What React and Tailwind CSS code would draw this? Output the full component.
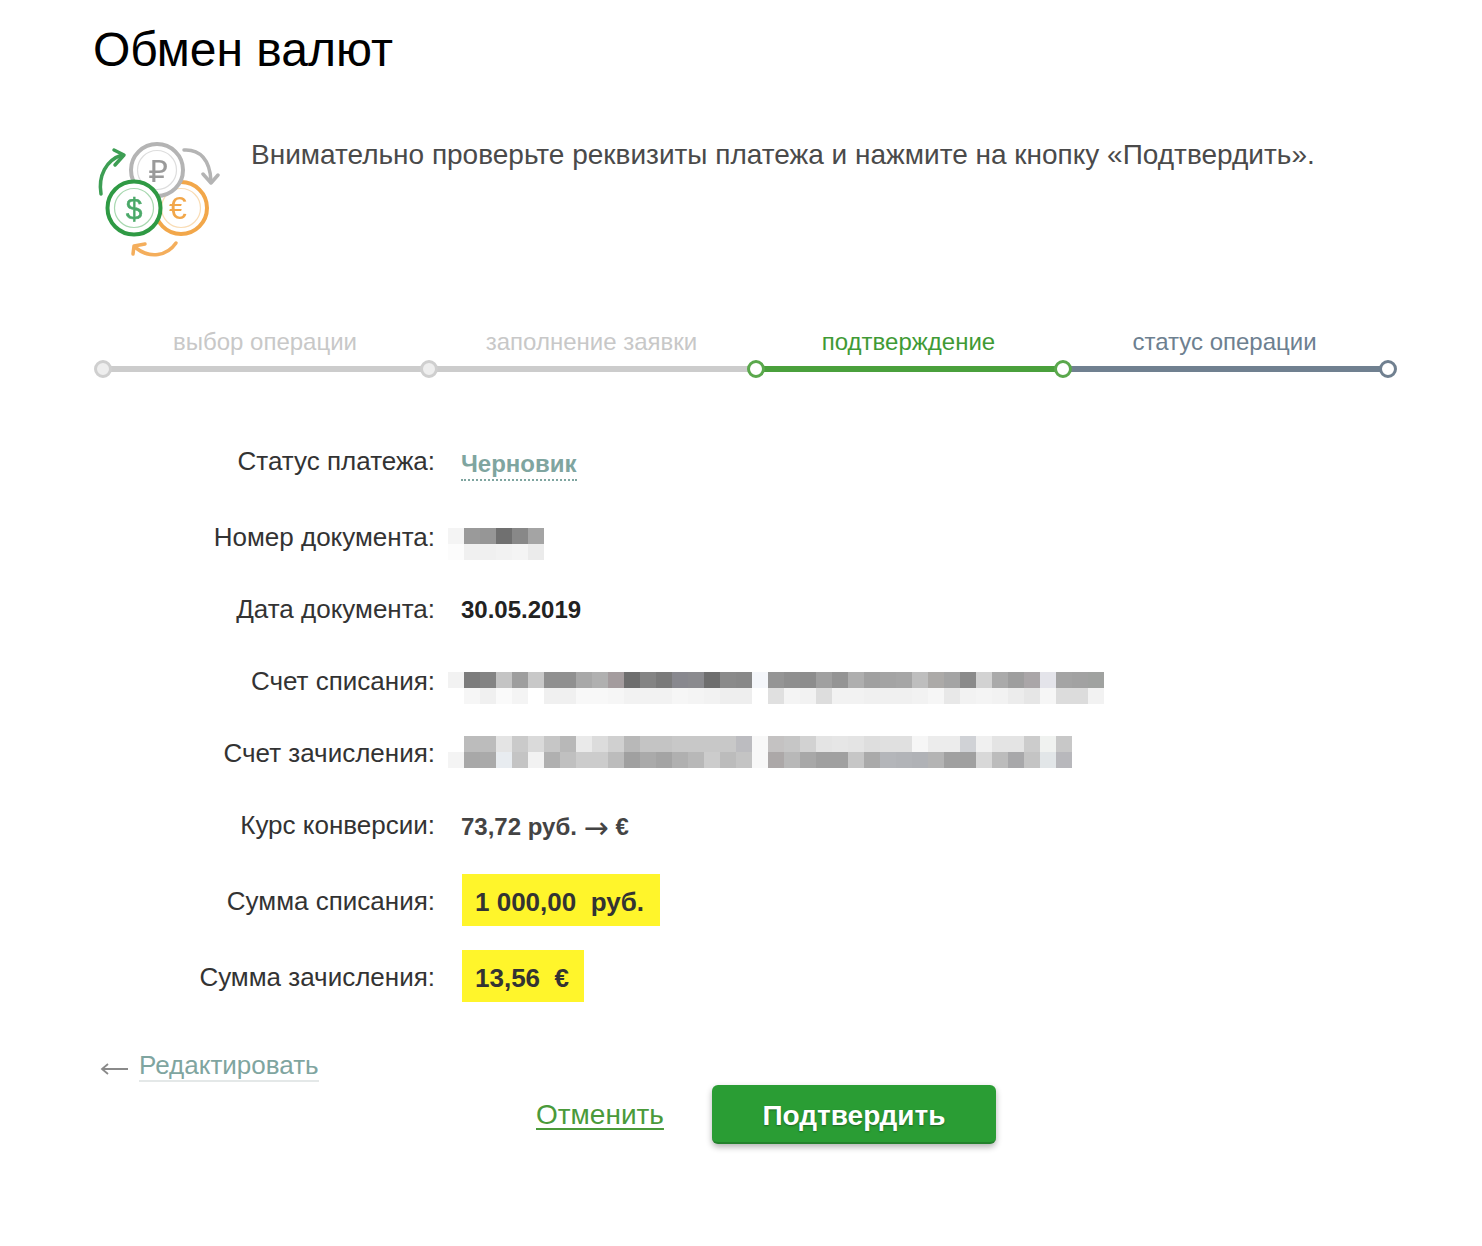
const steps = [
    { label: "выбор операции", width: "w-[326px]", text: "text-[#c8c8c8]", bar: "bg-[#cccccc]", dot: "border-[#cfcfcf] bg-[#eeeeee]" },
    { label: "заполнение заявки", width: "w-[327px]", text: "text-[#c8c8c8]", bar: "bg-[#cccccc]", dot: "border-[#cfcfcf] bg-[#eeeeee]" },
    { label: "подтверждение", width: "w-[307px]", text: "text-[#3f9a35]", bar: "bg-[#4aa03c]", dot: "border-[#5aa84c] bg-white" },
    { label: "статус операции", width: "w-[325px]", text: "text-[#6d8090]", bar: "bg-[#708090]", dot: "border-[#5aa84c] bg-white" },
];

const docPixels = [
    ["#f4f4f4", "#9a9a9a", "#969696", "#707070", "#888888", "#a4a4a4"],
    ["#fcfcfc", "#f0f0f0", "#f0f0f0", "#f2f2f2", "#f4f4f4", "#ebebeb"],
];

const fromPixels = [
    ["#f2f2f2", "#7c7c7c", "#848484", "#c4c4c4", "#9e9e9e", "#c8c8c8", "#909090", "#909090", "#a8a8a8", "#b0b0b0", "#a49c9e", "#6e6e6e", "#848484", "#7a7a7a", "#88888e", "#8a8a8e", "#6e6e6e", "#8a8a8a", "#888888", "#f4f6fa",
     "#959595", "#8f8f8f", "#8d8d8d", "#a0a0a0", "#949494", "#aeaeae", "#a0a0a0", "#a4a4a4", "#a6a6a6", "#bebebe", "#acaaa8", "#a4a4a4", "#8a8a8a", "#d2d2d2", "#aaaaaa", "#9e9e9e", "#aaa6a8", "#e4e4ea", "#a4a4a4", "#a2a2a2", "#a0a2a0"],
    ["#ffffff", "#f6f6f6", "#f0f0f0", "#fafafa", "#f4f4f4", "#ffffff", "#f0f0f0", "#f0f0f0", "#f8f8f8", "#f8f8f8", "#f6f6f6", "#f2f2f2", "#f2f2f2", "#f2f2f2", "#f6f6f6", "#f4f4f4", "#f2f2f2", "#eeeeee", "#eeeeee", "#ffffff",
     "#e0e0e0", "#f4f4f4", "#f2f2f2", "#dddddd", "#f2f2f2", "#f2f2f2", "#f0f0f0", "#f0f0f0", "#f0f0f0", "#f2f2f2", "#f6f6f6", "#e8e8e8", "#f2f2f2", "#f4f4f4", "#f2f2f2", "#ececec", "#e6e6e6", "#f6f6f6", "#dcdcdc", "#dcdcdc", "#f2f2f2"],
];

const toPixels = [
    ["#ffffff", "#bcbcbc", "#bcbcbc", "#e4e4e4", "#cacaca", "#dadada", "#c6c6c6", "#b8b8b8", "#eaeaea", "#dcdcdc", "#d0d0d0", "#b8b8b8", "#c4c4c4", "#c4c4c4", "#c8c8c8", "#c8c8c8", "#c8c8c8", "#c8c8c8", "#bcbcc0", "#f8f8f8",
     "#c4c2c2", "#c6c6c6", "#d2d2d2", "#e4e4e4", "#e6e6e6", "#e4e4e4", "#dedede", "#e0e0e0", "#e0e0e0", "#f6f6f6", "#ececec", "#ececec", "#d0d2d6", "#f0f0f0", "#e4e4e4", "#e4e4e4", "#cccccc", "#f0f2f0", "#c8c8c8"],
    ["#f4f4f4", "#a8a8a8", "#aaaaaa", "#e8ecf0", "#c4c4c4", "#f2f2f2", "#b0b0b0", "#c0c0c0", "#cccccc", "#cccccc", "#bcbcbc", "#a0a0a0", "#aaaaaa", "#a4a4a4", "#b0b0b0", "#b8b8b8", "#cccccc", "#bcbcbc", "#c4c4c4", "#f8f8f8",
     "#aca8a8", "#b8b8b8", "#a8a8a8", "#a0a0a0", "#a0a0a0", "#c6c6c6", "#aaaaaa", "#b4b6ba", "#b2b4b8", "#b0b2b6", "#b4b4b4", "#a0a0a0", "#a0a0a0", "#d8d8d8", "#bcbcbc", "#a8a8aa", "#c4c4c4", "#e2e6e8", "#b8b8bc"],
];

function Pixels({ rows, className }) {
    return <div className={`-ml-[13px] ${className}`}>
        {rows.map((row, i) => (
            <div key={i} className="flex">
                {row.map((color, j) => <div key={j} className="w-4 h-4 shrink-0" style={{ backgroundColor: color }}></div>)}
            </div>
        ))}
    </div>
}

function CurrencyIcon() {
    return <svg width="136" height="132" viewBox="94 134 136 132" className="block blur-[0.6px]" fill="none">
        <circle cx="181" cy="208" r="26" stroke="#f2a74a" strokeWidth="4" fill="white" />
        <circle cx="181" cy="208" r="19.5" stroke="#f9dcb4" strokeWidth="1.2" />
        <text x="178" y="219" textAnchor="middle" fontSize="32" fill="#f2a74a" fontFamily="Liberation Sans">€</text>
        <circle cx="157" cy="170" r="26" stroke="#b4b4b4" strokeWidth="4" fill="white" />
        <circle cx="157" cy="170" r="19.5" stroke="#dddddd" strokeWidth="1.2" />
        <text x="158" y="182" textAnchor="middle" fontSize="31" fill="#9a9a9a" fontFamily="DejaVu Sans">₽</text>
        <circle cx="134" cy="208" r="26.5" stroke="#2f9a44" strokeWidth="4" fill="white" />
        <circle cx="134" cy="208" r="19.5" stroke="#a8d8b0" strokeWidth="1.2" />
        <text x="134" y="219" textAnchor="middle" fontSize="30" fill="#4aa868" stroke="#4aa868" strokeWidth="0.5" fontFamily="Liberation Sans">$</text>
        <path d="M101 194C98 176 106 160 122 155" stroke="#3d9e54" strokeWidth="3.5" strokeLinecap="round" />
        <path d="M114 150L124 155L115 165" stroke="#3d9e54" strokeWidth="3.5" strokeLinecap="round" strokeLinejoin="round" />
        <path d="M184 150C200 149 210 160 211 181" stroke="#b4b4b4" strokeWidth="3.5" strokeLinecap="round" />
        <path d="M203 174L211 183L218 175" stroke="#b4b4b4" strokeWidth="3.5" strokeLinecap="round" strokeLinejoin="round" />
        <path d="M176 243C167 256 150 259 136 248" stroke="#f4ae5c" strokeWidth="3.5" strokeLinecap="round" />
        <path d="M133 254L134 246L145 244" stroke="#f4ae5c" strokeWidth="3.5" strokeLinecap="round" strokeLinejoin="round" />
    </svg>
}

function Stepper() {
    return <div className="flex ml-[9px] mt-[61px]">
        {steps.map((step, i) => (
            <div key={i} className={`${step.width} shrink-0`}>
                <div className={`text-[24px] leading-[30px] text-center pr-[2px] ${step.text}`}>{step.label}</div>
                <div className={`relative h-[6px] mt-[9px] ${step.bar}`}>
                    <div className={`absolute -left-[9px] -top-[6px] w-[18px] h-[18px] rounded-full border-[3px] ${step.dot}`}></div>
                    {i === 3 && <div className="absolute -right-[9px] -top-[6px] w-[18px] h-[18px] rounded-full border-[3px] border-[#708090] bg-white"></div>}
                </div>
            </div>
        ))}
    </div>
}

function Row({ label, children, className }) {
    return <div className={`flex items-center h-[32px] ${className || ""}`}>
        <div className="w-[341px] shrink-0 text-right text-[26px] leading-[32px] text-[#333333]">{label}</div>
        <div className="ml-[26px] flex items-center">{children}</div>
    </div>
}

function Highlight({ children, width }) {
    return <div className={`shrink-0 h-[52px] ml-px -mt-[2px] pl-[13px] pt-[4px] flex items-center bg-[#fff52b] text-[26px] font-bold text-[#333333] whitespace-pre ${width}`}>{children}</div>
}

export default function App() {
    return <div className="w-[1482px] h-[1246px] pl-[94px] bg-white font-['Liberation_Sans',Arial,sans-serif] overflow-hidden">
        <h1 className="text-[48px] leading-[54px] pt-[23px] -ml-px text-black">Обмен валют</h1>

        <div className="flex mt-[57px]">
            <CurrencyIcon />
            <p className="ml-[21px] mt-[3px] text-[28px] leading-[36px] text-[#4a4a4a] whitespace-nowrap">Внимательно проверьте реквизиты платежа и нажмите на кнопку «Подтвердить».</p>
        </div>

        <Stepper />

        <div className="flex flex-col gap-10 mt-[73px]">
            <Row label="Статус платежа:">
                <span className="text-[24px] leading-[30px] font-bold text-[#7fa5a0] border-b-2 border-dotted border-[#7fa5a0] mt-[8px]">Черновик</span>
            </Row>
            <Row label="Номер документа:" className="mt-1">
                <Pixels rows={docPixels} className="mt-[14px]" />
            </Row>
            <Row label="Дата документа:">
                <span className="text-[24px] font-bold text-[#222222] mt-[2px]">30.05.2019</span>
            </Row>
            <Row label="Счет списания:">
                <Pixels rows={fromPixels} className="mt-[14px]" />
            </Row>
            <Row label="Счет зачисления:">
                <Pixels rows={toPixels} className="-mt-[2px]" />
            </Row>
            <Row label="Курс конверсии:">
                <span className="text-[24px] font-bold text-[#444444] mt-[4px] whitespace-pre">73,72 руб. <span className="inline-block translate-y-[3px] font-['DejaVu_Sans'] font-normal text-[30px] leading-none">→</span> €</span>
            </Row>
            <Row label="Сумма списания:" className="mt-1">
                <Highlight width="w-[198px]">1 000,00  руб.</Highlight>
            </Row>
            <Row label="Сумма зачисления:" className="mt-1">
                <Highlight width="w-[122px]">13,56  €</Highlight>
            </Row>
        </div>

        <div className="flex items-center mt-[57px] ml-[6px]">
            <svg width="30" height="14" viewBox="0 0 30 14" fill="none" className="mt-[6px]">
                <path d="M2 7H28M8 2L2 7L8 12" stroke="#8a8a8a" strokeWidth="1.8" />
            </svg>
            <span className="ml-[9px] text-[26px] leading-[30px] text-[#7fa5a0] border-b-2 border-[#e4e8e8]">Редактировать</span>
        </div>

        <div className="flex items-center mt-[3px] ml-[442px]">
            <span className="text-[28px] leading-[34px] text-[#4a9a3a] underline underline-offset-[4px] decoration-2">Отменить</span>
            <button className="ml-[48px] w-[284px] h-[59px] pt-[4px] rounded-[6px] bg-[#2a9d34] border-b-2 border-[#23822c] text-white text-[28px] font-bold shadow-[0_3px_6px_rgba(0,0,0,0.3)] [text-shadow:0_1px_2px_rgba(0,0,0,0.35)]">Подтвердить</button>
        </div>
    </div>
}
